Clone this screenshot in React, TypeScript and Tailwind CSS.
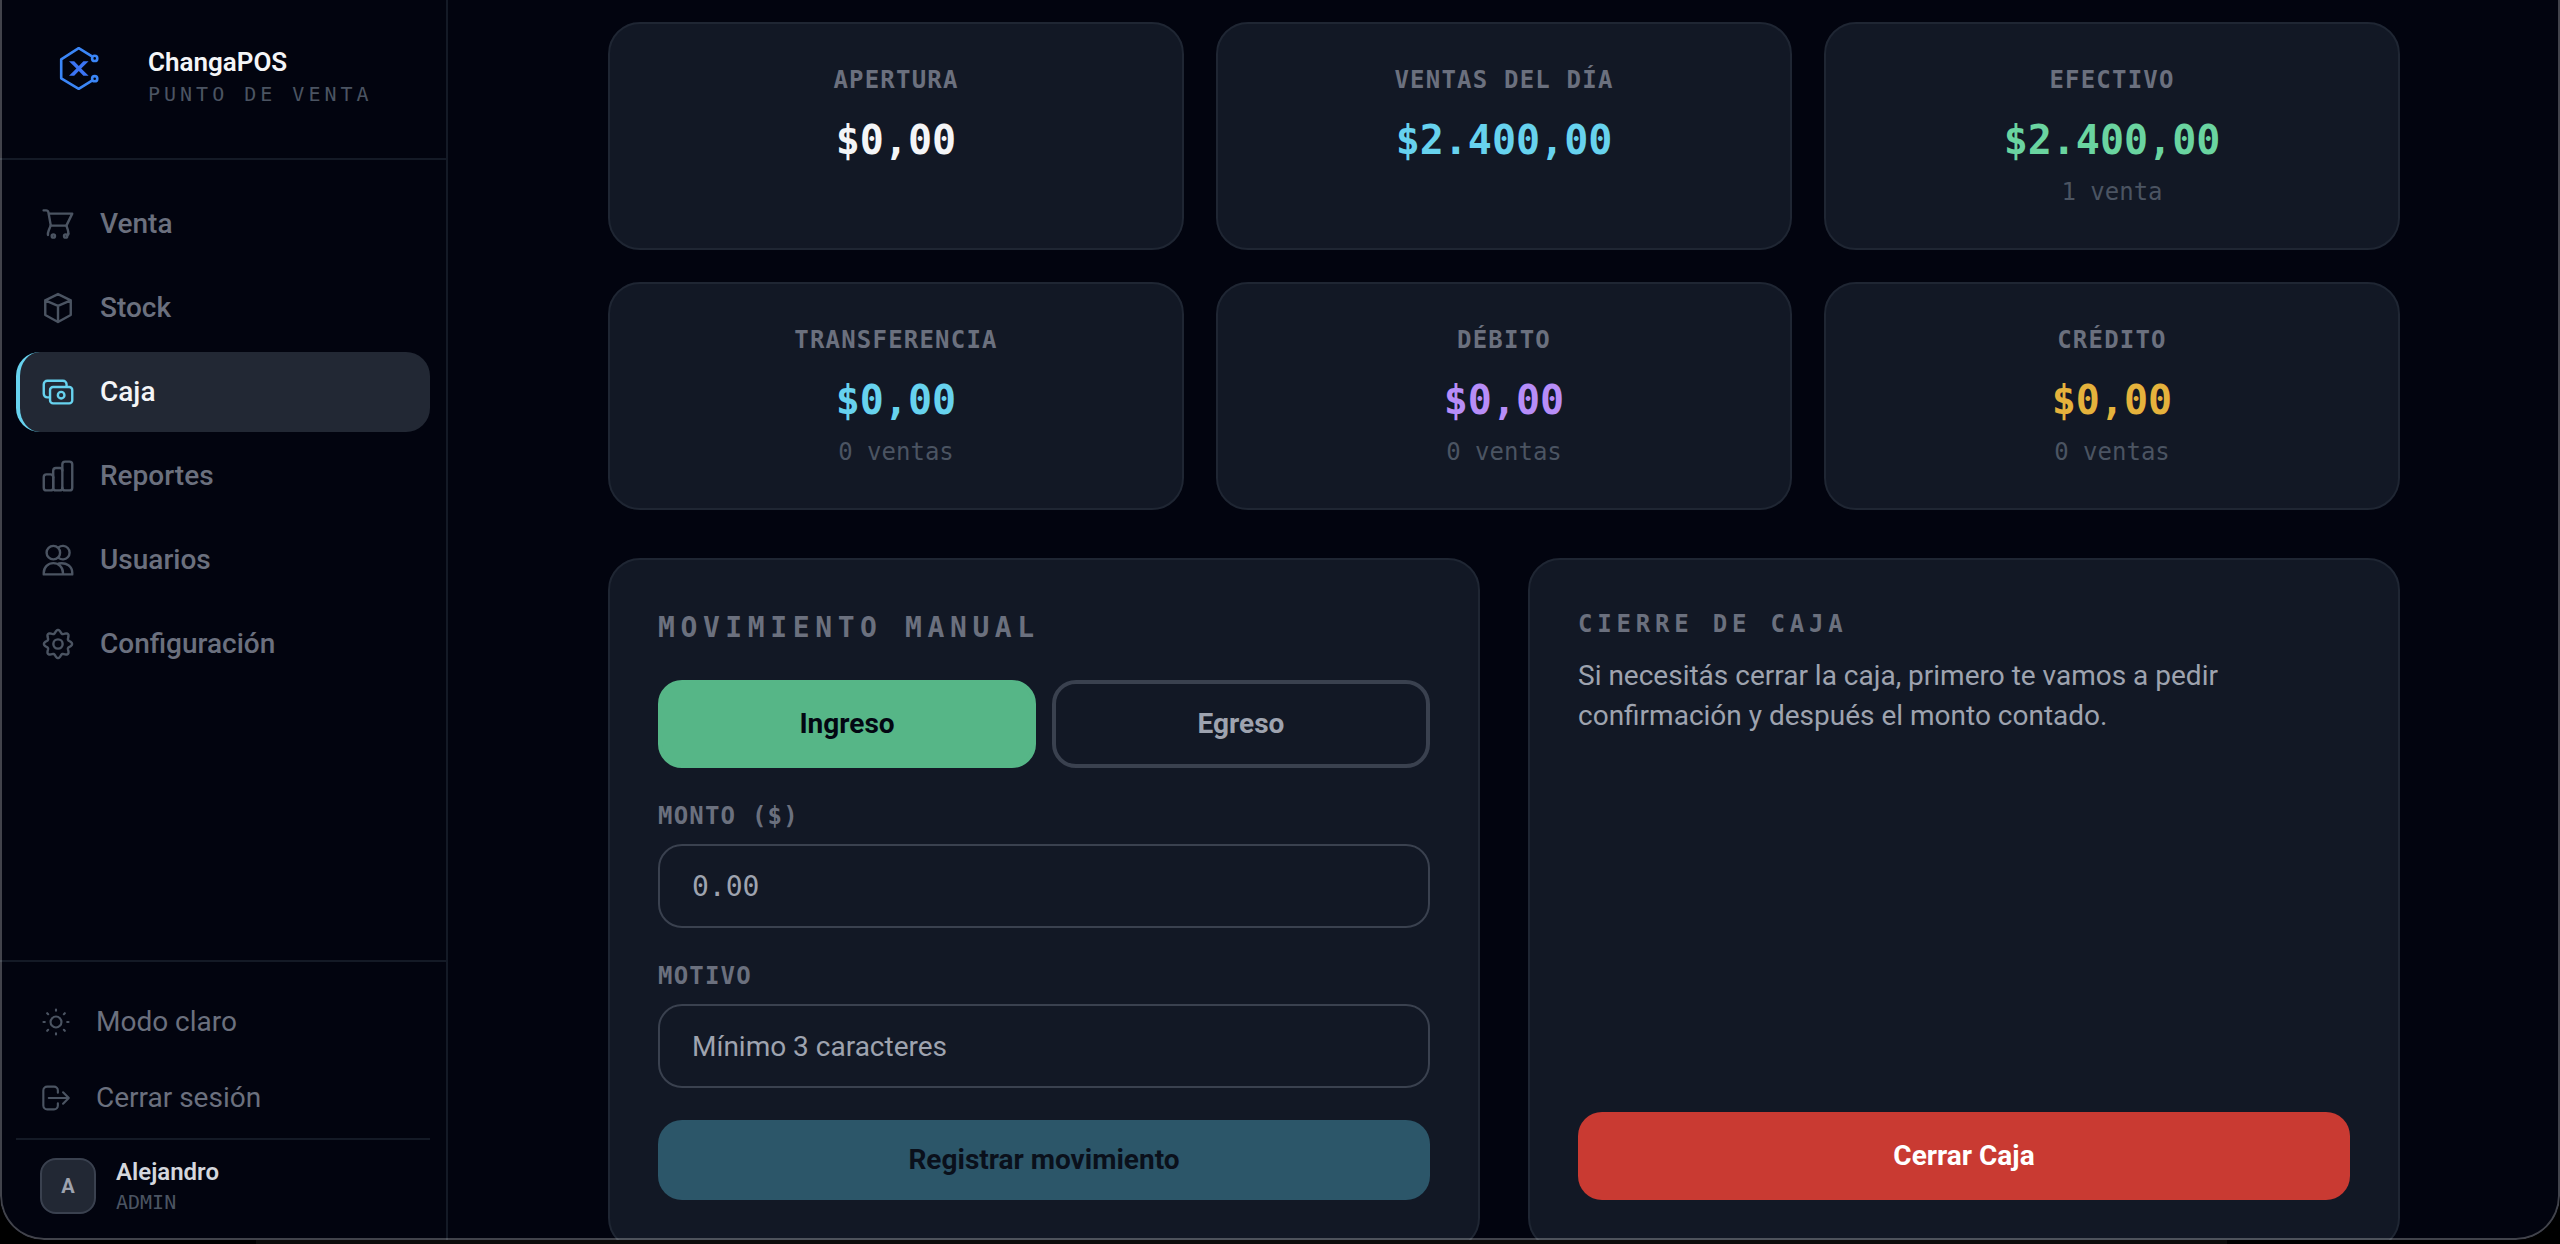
import { useState } from "react";
import type { ReactNode } from "react";

/* ---------- icons ---------- */

function Icon({ className, children }: { className: string; children: ReactNode }) {
  return (
    <svg
      viewBox="0 0 24 24"
      fill="none"
      stroke="currentColor"
      strokeWidth="1.6"
      strokeLinecap="round"
      strokeLinejoin="round"
      aria-hidden="true"
      className={className}
    >
      {children}
    </svg>
  );
}

const cogPath =
  Array.from({ length: 96 }, (_, i) => {
    const t = (i / 96) * Math.PI * 2;
    const r = 8.3 + 1.1 * Math.cos(8 * t);
    return `${i === 0 ? "M" : "L"}${(12 + r * Math.cos(t)).toFixed(2)} ${(12 + r * Math.sin(t)).toFixed(2)}`;
  }).join("") + "Z";

const cart = (
  <>
    <path d="M2.4 2.9h1.7c.8 0 1.3.5 1.5 1.3l1.6 8.9M5.8 5.1h15.7l-3.9 8H7.2" />
    <path d="M7.1 13.1l-1.3 3.2c-.4 1-.6 1.9-.5 3M17.6 13.1l.9 2.7c.4 1.2.5 2 .3 3.2" />
    <circle cx="8.9" cy="20" r="1.1" />
    <circle cx="17.1" cy="20" r="1.1" />
    <path d="M18.9 18.4l-.8 1.2" />
  </>
);
const cube = (
  <path d="M12 2.7l8.5 4.2v9.8L12 21.3l-8.5-4.6V6.9L12 2.7zM3.5 6.9l8.5 3.7 8.5-3.7M12 10.6v10.7" />
);
const cash = (
  <>
    <path d="M6.6 15.6H4.9a2.4 2.4 0 0 1-2.4-2.4V6.9a2.4 2.4 0 0 1 2.4-2.4h10.4a2.4 2.4 0 0 1 2.4 2.4v1.6" />
    <rect x="6.7" y="8.7" width="14.8" height="10.9" rx="2" />
    <circle cx="14.1" cy="14.1" r="2.2" />
  </>
);
const bars = (
  <>
    <rect x="2.5" y="10.9" width="6.3" height="10.7" rx="1.8" />
    <path d="M8.8 13V8.5a1.8 1.8 0 0 1 1.8-1.8h2.5c1 0 1.8.6 1.8 1.6" />
    <path d="M8.8 13v6.8c0 1 .8 1.8 1.8 1.8h2.5c1 0 1.8-.8 1.8-1.8" />
    <rect x="14.9" y="2.4" width="6.6" height="19.2" rx="1.8" />
  </>
);
const users = (
  <>
    <circle cx="8.9" cy="7.1" r="4.5" />
    <path d="M12.4 3.6a4.5 4.5 0 1 1 0 7" />
    <path d="M2.5 21.6v-1.1a6.4 6.4 0 0 1 12.8 0v1.1zM12.6 14.3c5.2-.9 8.9 2 8.9 6.2v1.1h-6.2" />
  </>
);
const cog = (
  <>
    <path d={cogPath} />
    <circle cx="12" cy="12" r="3.1" />
  </>
);
const sun = (
  <>
    <circle cx="12" cy="12" r="4.1" />
    <path d="M12 2.6v1M12 20.4v1M2.6 12h1M20.4 12h1M5.4 5.4l.7.7M17.9 17.9l.7.7M5.4 18.6l.7-.7M17.9 6.1l.7-.7" />
  </>
);
const signOut = (
  <path d="M13.4 8V6.4a2.9 2.9 0 0 0-2.9-2.9H5.4a2.9 2.9 0 0 0-2.9 2.9v11.2a2.9 2.9 0 0 0 2.9 2.9h5.1a2.9 2.9 0 0 0 2.9-2.9V16M6.6 12h15M17.3 7.7l4.3 4.3-4.3 4.3" />
);

function Logo() {
  return (
    <svg viewBox="0 0 96 96" fill="none" aria-hidden="true" className="size-24 shrink-0">
      <g stroke="#3b86f7" strokeWidth="2.6" strokeLinejoin="round">
        <path d="M64 28.4L50.7 20.2 33.2 31.3v19l17.5 10.5L64 52.6" />
        <circle cx="66.7" cy="30.4" r="2.6" />
        <circle cx="66.7" cy="50.7" r="2.6" />
      </g>
      <path
        fill="#3b74f5"
        d="M41 33.2h5.2l4.6 4.8 4.6-4.8h5.2L53.2 40.5l7.4 7.3h-5.2l-4.6-4.8-4.6 4.8H41l7.4-7.3z"
      />
    </svg>
  );
}

/* ---------- data ---------- */

const nav = [
  { label: "Venta", icon: cart },
  { label: "Stock", icon: cube },
  { label: "Caja", icon: cash },
  { label: "Reportes", icon: bars },
  { label: "Usuarios", icon: users },
  { label: "Configuración", icon: cog },
];

const stats = [
  { label: "Apertura", value: "$0,00", color: "text-[#f4f5f7]" },
  { label: "Ventas del día", value: "$2.400,00", color: "text-[#67d2ee]" },
  { label: "Efectivo", value: "$2.400,00", color: "text-[#6ad4a0]", note: "1 venta" },
  { label: "Transferencia", value: "$0,00", color: "text-[#67d2ee]", note: "0 ventas" },
  { label: "Débito", value: "$0,00", color: "text-[#b78df8]", note: "0 ventas" },
  { label: "Crédito", value: "$0,00", color: "text-[#e5b23c]", note: "0 ventas" },
];

const mono = "font-['DejaVu_Sans_Mono',monospace]";

/* ---------- sections ---------- */

function Sidebar() {
  return (
    <aside className="flex w-[448px] shrink-0 flex-col border-r-2 border-[#141a26]">
      <header className="flex items-center gap-6 border-b-2 border-[#141a26] px-7 pt-7 pb-[34px]">
        <Logo />
        <div>
          <p className="text-[26px] leading-9 font-semibold text-[#f4f5f7]">ChangaPOS</p>
          <p className={`${mono} text-[20px] leading-7 tracking-[0.2em] whitespace-nowrap text-[#4b5462] uppercase`}>
            Punto de venta
          </p>
        </div>
      </header>

      <nav className="flex flex-1 flex-col gap-1 px-4 py-6">
        {nav.map(({ label, icon }) => {
          const active = label === "Caja";
          return (
            <a
              key={label}
              href={`#${label.toLowerCase()}`}
              aria-current={active ? "page" : undefined}
              className={`flex items-center gap-6 rounded-3xl border-l-4 py-5 pr-6 pl-5 text-[28px] leading-10 font-medium ${
                active ? "border-[#67d2ee] bg-[#222834] text-[#f4f5f7]" : "border-transparent text-[#6b707e]"
              }`}
            >
              <Icon className={active ? "size-9 text-[#67d2ee]" : "size-9 text-[#4b5462]"}>{icon}</Icon>
              {label}
            </a>
          );
        })}
      </nav>

      <footer className="flex flex-col gap-1 border-t-2 border-[#141a26] px-4 pt-6 pb-6">
        {[
          { label: "Modo claro", icon: sun },
          { label: "Cerrar sesión", icon: signOut },
        ].map(({ label, icon }) => (
          <button
            key={label}
            type="button"
            className="flex items-center gap-6 rounded-3xl px-6 py-4 text-[28px] leading-10 text-[#6b707e]"
          >
            <Icon className="size-8 text-[#4b5462]">{icon}</Icon>
            {label}
          </button>
        ))}
        <div className="flex items-center gap-5 border-t-2 border-[#141a26] px-6 pt-4">
          <span className="flex size-14 items-center justify-center rounded-2xl border-2 border-[#3a414f] bg-[#222834] text-[20px] font-bold text-[#9ea3af]">
            A
          </span>
          <div>
            <p className="text-[24px] leading-8 font-semibold text-[#d4d7dd]">Alejandro</p>
            <p className={`${mono} text-[20px] leading-7 text-[#4b5462] uppercase`}>Admin</p>
          </div>
        </div>
      </footer>
    </aside>
  );
}

function StatCard({ label, value, color, note }: (typeof stats)[number]) {
  return (
    <article className="min-h-[228px] rounded-[32px] border-2 border-[#1f2633] bg-[#121825] px-8 py-10 text-center">
      <h2 className={`${mono} text-[24px] leading-8 font-semibold tracking-[0.05em] text-[#6b707e] uppercase`}>
        {label}
      </h2>
      <p className={`${mono} mt-4 text-[40px] leading-14 font-bold ${color}`}>{value}</p>
      {note && <p className={`${mono} mt-2 text-[24px] leading-8 text-[#4b5462]`}>{note}</p>}
    </article>
  );
}

const fieldLabel = `${mono} text-[24px] leading-8 font-semibold tracking-[0.05em] text-[#6b707e] uppercase`;
const fieldInput =
  "h-[84px] w-full rounded-3xl border-2 border-[#3a414f] bg-transparent px-8 text-[28px] text-[#f4f5f7] outline-none placeholder:text-[#9ea3af]";

function ManualMovement() {
  const [kind, setKind] = useState("Ingreso");
  return (
    <form
      onSubmit={(e) => e.preventDefault()}
      className="flex flex-col gap-8 rounded-[32px] border-2 border-[#1f2633] bg-[#121825] p-12"
    >
      <h2 className={`${mono} text-[28px] leading-10 font-semibold tracking-[0.2em] text-[#6b707e] uppercase`}>
        Movimiento manual
      </h2>
      <div className="grid grid-cols-2 gap-4">
        {["Ingreso", "Egreso"].map((k) => (
          <button
            key={k}
            type="button"
            aria-pressed={kind === k}
            onClick={() => setKind(k)}
            className={`rounded-3xl border-4 py-5 text-[28px] leading-10 font-bold ${
              kind === k
                ? "border-[#56b687] bg-[#56b687] text-[#030712]"
                : "border-[#3a414f] bg-transparent text-[#9ea3af]"
            }`}
          >
            {k}
          </button>
        ))}
      </div>
      <div className="flex flex-col gap-3">
        <label htmlFor="monto" className={fieldLabel}>
          Monto ($)
        </label>
        <input id="monto" inputMode="decimal" placeholder="0.00" className={`${mono} ${fieldInput}`} />
      </div>
      <div className="flex flex-col gap-3">
        <label htmlFor="motivo" className={fieldLabel}>
          Motivo
        </label>
        <input id="motivo" placeholder="Mínimo 3 caracteres" className={fieldInput} />
      </div>
      <button
        type="submit"
        disabled
        className="rounded-3xl bg-[#2c5669] py-5 text-[28px] leading-10 font-bold text-[#0a101b]"
      >
        Registrar movimiento
      </button>
    </form>
  );
}

function CloseRegister() {
  return (
    <section className="flex flex-col rounded-[32px] border-2 border-[#1f2633] bg-[#121825] p-12">
      <h2 className={`${mono} text-[24px] leading-8 font-semibold tracking-[0.2em] text-[#6b707e] uppercase`}>
        Cierre de caja
      </h2>
      <p className="mt-4 max-w-[700px] text-[28px] leading-10 text-[#9ea3af]">
        Si necesitás cerrar la caja, primero te vamos a pedir confirmación y después el monto contado.
      </p>
      <button
        type="button"
        className="mt-auto rounded-3xl bg-[#c93a32] py-6 text-[28px] leading-10 font-bold text-white"
      >
        Cerrar Caja
      </button>
    </section>
  );
}

export default function App() {
  return (
    <div className="flex h-screen flex-col overflow-hidden bg-black font-['Roboto',sans-serif]">
      <div className="relative flex min-h-0 flex-1 overflow-hidden rounded-b-[44px] bg-[#02040f]">
        <Sidebar />
        <main className="min-w-0 flex-1 overflow-hidden px-12 pt-[22px]">
          <div className="mx-auto flex max-w-[1792px] flex-col gap-12">
            <section aria-label="Resumen" className="grid grid-cols-3 gap-8">
              {stats.map((s) => (
                <StatCard key={s.label} {...s} />
              ))}
            </section>
            <div className="grid grid-cols-2 gap-12">
              <ManualMovement />
              <CloseRegister />
            </div>
          </div>
        </main>
        <div className="pointer-events-none absolute inset-0 rounded-b-[44px] border-x-2 border-b-2 border-white/25" />
      </div>
      <div className="flex h-1 shrink-0 pr-[13%] pl-[10%]">
        <div className="flex-1 bg-[#0c0c0b]" />
      </div>
    </div>
  );
}
